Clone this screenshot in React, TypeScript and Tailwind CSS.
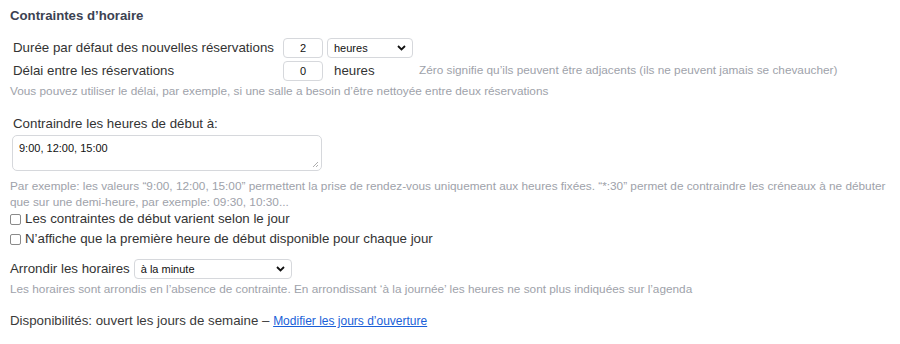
export default function App() {
  return (
    <div className="w-[900px] h-[344px] bg-white overflow-hidden pl-[10px] pt-[7px] text-[#333] font-['Liberation_Sans',Arial,sans-serif]">
      <h3 className="h-[18px] leading-[18px] text-[13.2px] font-bold text-[#3c4252]">Contraintes d’horaire</h3>

      <div className="mt-[13px] flex flex-col gap-[3px]">
        <div className="flex items-center h-[20px]">
          <span className="w-[273px] pl-[3px] text-[13.3px]">Durée par défaut des nouvelles réservations</span>
          <input
            readOnly
            value="2"
            className="w-[40px] h-[20px] border border-[#d6d8dc] rounded-[4px] text-center text-[11px] text-[#111]"
          />
          <div className="ml-[4px] w-[86px] h-[20px] border border-[#d6d8dc] rounded-[4px] flex items-center justify-between px-[6px] text-[11px] text-[#111]">
            <span>heures</span>
            <Chevron />
          </div>
        </div>
        <div className="flex items-center h-[20px]">
          <span className="w-[273px] pl-[3px] text-[13.3px]">Délai entre les réservations</span>
          <input
            readOnly
            value="0"
            className="w-[40px] h-[20px] border border-[#d6d8dc] rounded-[4px] text-center text-[11px] text-[#111]"
          />
          <span className="ml-[11px] w-[85px] text-[13.3px]">heures</span>
          <span className="text-[11.8px] text-[#9ea2aa]">Zéro signifie qu’ils peuvent être adjacents (ils ne peuvent jamais se chevaucher)</span>
        </div>
      </div>
      <p className="mt-[2px] text-[11.8px] leading-[16px] text-[#9ea2aa]">
        Vous pouvez utiliser le délai, par exemple, si une salle a besoin d’être nettoyée entre deux réservations
      </p>

      <p className="mt-[16px] pl-[3px] text-[13.3px] leading-[18px]">Contraindre les heures de début à:</p>
      <div className="mt-[2px] ml-[2px] w-[310px] h-[36px] border border-[#d6d8dc] rounded-[5px] px-[6px] pt-[4px] text-[11px] text-[#111] relative">
        9:00, 12:00, 15:00
        <svg className="absolute right-[2px] bottom-[2px]" width="7" height="7" viewBox="0 0 7 7">
          <path d="M6 1L1 6M6 4L4 6" stroke="#999" strokeWidth="0.8" />
        </svg>
      </div>
      <p className="mt-[7px] pr-[8px] text-[11.8px] leading-[16px] text-[#9ea2aa]">
        Par exemple: les valeurs “9:00, 12:00, 15:00” permettent la prise de rendez-vous uniquement aux heures fixées. “*:30” permet de contraindre les créneaux à ne débuter que sur une demi-heure, par exemple: 09:30, 10:30...
      </p>
      <label className="-mt-[1px] flex items-center h-[20px] text-[13.3px]">
        <span className="w-[11px] h-[11px] border border-[#8a8a8a] rounded-[2px] mr-[4px]" />
        Les contraintes de début varient selon le jour
      </label>
      <label className="flex items-center h-[20px] text-[13.3px]">
        <span className="w-[11px] h-[11px] border border-[#8a8a8a] rounded-[2px] mr-[4px]" />
        N’affiche que la première heure de début disponible pour chaque jour
      </label>

      <div className="mt-[10px] flex items-center h-[20px]">
        <span className="text-[13.3px] mr-[4px]">Arrondir les horaires</span>
        <div className="w-[158px] h-[20px] border border-[#d6d8dc] rounded-[4px] flex items-center justify-between px-[6px] text-[11px] text-[#111]">
          <span>à la minute</span>
          <Chevron />
        </div>
      </div>
      <p className="mt-[2px] text-[11.8px] leading-[16px] text-[#9ea2aa]">
        Les horaires sont arrondis en l’absence de contrainte. En arrondissant ‘à la journée’ les heures ne sont plus indiquées sur l’agenda
      </p>

      <p className="mt-[15px] text-[13.3px] leading-[18px] text-[#3a3a3a]">
        Disponibilités: ouvert les jours de semaine –{" "}
        <a className="text-[12px] text-[#1a5fd8] underline">Modifier les jours d’ouverture</a>
      </p>
    </div>
  );
}

function Chevron() {
  return (
    <svg width="9" height="6" viewBox="0 0 9 6">
      <path d="M1 1l3.5 3.5L8 1" stroke="#111" strokeWidth="1.8" fill="none" />
    </svg>
  );
}
